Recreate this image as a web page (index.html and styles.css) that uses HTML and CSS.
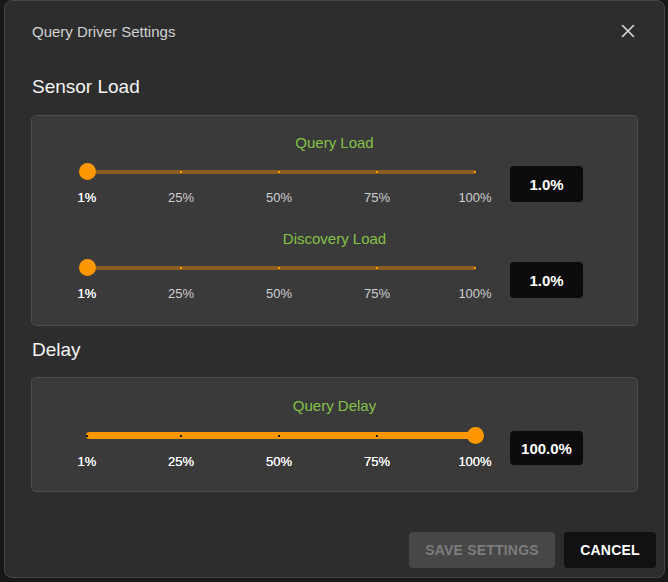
FILE: index.html
```html
<!DOCTYPE html>
<html>
<head>
	<title>Query Driver Settings</title>
	<link rel="stylesheet" href="styles.css">
</head>
<body>
	<div class="dialog">
		<div class="dialog-head">
			<span class="dialog-title">Query Driver Settings</span>
			<svg class="close" width="14" height="14" viewBox="0 0 14 14">
				<path d="M1.5 1.5 L12.5 12.5 M12.5 1.5 L1.5 12.5" stroke="#dcdcdc" stroke-width="1.6" stroke-linecap="round"/>
			</svg>
		</div>

		<h2 class="section">Sensor Load</h2>
		<div class="panel">
			<div class="group">
				<div class="group-label">Query Load</div>
				<div class="slider-row">
					<div class="slider">
						<div class="track">
							<div class="rail"></div>
							<span class="tick t0"></span>
							<span class="tick t25"></span>
							<span class="tick t50"></span>
							<span class="tick t75"></span>
							<span class="tick t100"></span>
							<span class="thumb t0"></span>
						</div>
						<div class="marks">
							<span class="mark t0 on">1%</span>
							<span class="mark t25">25%</span>
							<span class="mark t50">50%</span>
							<span class="mark t75">75%</span>
							<span class="mark t100">100%</span>
						</div>
					</div>
					<div class="value">1.0%</div>
				</div>
			</div>
			<div class="group">
				<div class="group-label">Discovery Load</div>
				<div class="slider-row">
					<div class="slider">
						<div class="track">
							<div class="rail"></div>
							<span class="tick t0"></span>
							<span class="tick t25"></span>
							<span class="tick t50"></span>
							<span class="tick t75"></span>
							<span class="tick t100"></span>
							<span class="thumb t0"></span>
						</div>
						<div class="marks">
							<span class="mark t0 on">1%</span>
							<span class="mark t25">25%</span>
							<span class="mark t50">50%</span>
							<span class="mark t75">75%</span>
							<span class="mark t100">100%</span>
						</div>
					</div>
					<div class="value">1.0%</div>
				</div>
			</div>
		</div>

		<h2 class="section delay">Delay</h2>
		<div class="panel delay-panel">
			<div class="group">
				<div class="group-label">Query Delay</div>
				<div class="slider-row">
					<div class="slider full">
						<div class="track">
							<div class="rail"></div>
							<div class="fill"></div>
							<span class="tick t0"></span>
							<span class="tick t25"></span>
							<span class="tick t50"></span>
							<span class="tick t75"></span>
							<span class="tick t100"></span>
							<span class="thumb t100"></span>
						</div>
						<div class="marks">
							<span class="mark t0 on">1%</span>
							<span class="mark t25 on">25%</span>
							<span class="mark t50 on">50%</span>
							<span class="mark t75 on">75%</span>
							<span class="mark t100 on">100%</span>
						</div>
					</div>
					<div class="value small">100.0%</div>
				</div>
			</div>
		</div>

		<div class="actions">
			<button class="btn save" disabled>SAVE SETTINGS</button>
			<button class="btn cancel">CANCEL</button>
		</div>
	</div>
</body>
</html>
```

FILE: styles.css
```css
body {
	margin: 0;
	background-color: #181818;
	font-family: "Liberation Sans", Arial, sans-serif;
}

.dialog {
	box-sizing: border-box;
	width: 661px;
	height: 578px;
	margin-left: 4px;
	padding: 0 26px;

	background-color: #2d2d2d;
	border: 1px solid #464646;
	border-radius: 8px;

	display: flex;
	flex-direction: column;
}

.dialog-head {
	display: flex;
	align-items: center;
	justify-content: space-between;
	padding-top: 20px;
	height: 20px;
}
.dialog-title {
	font-size: 15px;
	color: #d2d2d2;
	padding-left: 1px;
}
.close {
	margin-right: 3px;
}

.section {
	margin: 34px 0 16px 1px;
	font-size: 19px;
	line-height: 24px;
	font-weight: normal;
	color: #f4f4f4;
}
.section.delay {
	margin-top: 12px;
	margin-bottom: 15px;
}

.panel {
	background-color: #3a3a3a;
	border: 1px solid #4c4c4c;
	border-radius: 5px;
	padding: 18px 0 24px;
	display: flex;
	flex-direction: column;
	gap: 25px;
}
.delay-panel {
	padding-top: 19px;
	padding-bottom: 22px;
}

.group-label {
	text-align: center;
	font-size: 15px;
	line-height: 18px;
	color: #84c246;
	margin-bottom: 11px;
}
.delay-panel .group-label {
	margin-bottom: 12px;
}

.slider-row {
	display: flex;
	align-items: center;
}

.slider {
	width: 388px;
	margin-left: 55px;
}

/* the rail, ticks and thumb sit on top of each other */
.track {
	position: relative;
	height: 18px;
}
.rail {
	position: absolute;
	left: 0;
	right: 0;
	top: 7px;
	height: 4px;
	background-color: #8b5d20;
}
.fill {
	position: absolute;
	left: -1px;
	right: -1px;
	top: 5px;
	height: 7px;
	border-radius: 4px;
	background-color: #ff9800;
}
.tick {
	position: absolute;
	top: 8px;
	width: 2px;
	height: 2px;
	margin-left: -1px;
	background-color: #ff9800;
}
.full .tick {
	background-color: #1e1e1e;
}
.thumb {
	position: absolute;
	top: 0;
	width: 17px;
	height: 17px;
	margin-left: -8.5px;
	border-radius: 50%;
	background-color: #ff9800;
}

.marks {
	position: relative;
	height: 14px;
	margin-top: 10px;
}
.mark {
	position: absolute;
	top: 0;
	transform: translateX(-50%);
	font-size: 13px;
	line-height: 14px;
	color: #cfcfcf;
}
.mark.on {
	color: #ffffff;
	text-shadow: 0 0 0.4px #fff;
}

.t0 { left: 0; }
.t25 { left: 24.24%; }
.t50 { left: 49.49%; }
.t75 { left: 74.75%; }
.t100 { left: 100%; }

.value {
	box-sizing: border-box;
	width: 73px;
	height: 36px;
	margin-left: 35px;
	border-radius: 4px;
	background-color: #0c0c0c;
	color: #ffffff;
	font-size: 15px;
	font-weight: bold;
	display: flex;
	align-items: center;
	justify-content: center;
}
.value.small {
	height: 34px;
}

.actions {
	margin-top: auto;
	margin-bottom: 9px;
	margin-right: -18px;
	display: flex;
	justify-content: flex-end;
	gap: 9px;
}
.btn {
	height: 36px;
	border: none;
	border-radius: 4px;
	font-family: "Liberation Sans", Arial, sans-serif;
	font-size: 14px;
	font-weight: bold;
	letter-spacing: 0.2px;
}
.save {
	width: 146px;
	background-color: #474747;
	color: #7c7c7c;
}
.cancel {
	width: 92px;
	background-color: #111111;
	color: #ffffff;
}
```
